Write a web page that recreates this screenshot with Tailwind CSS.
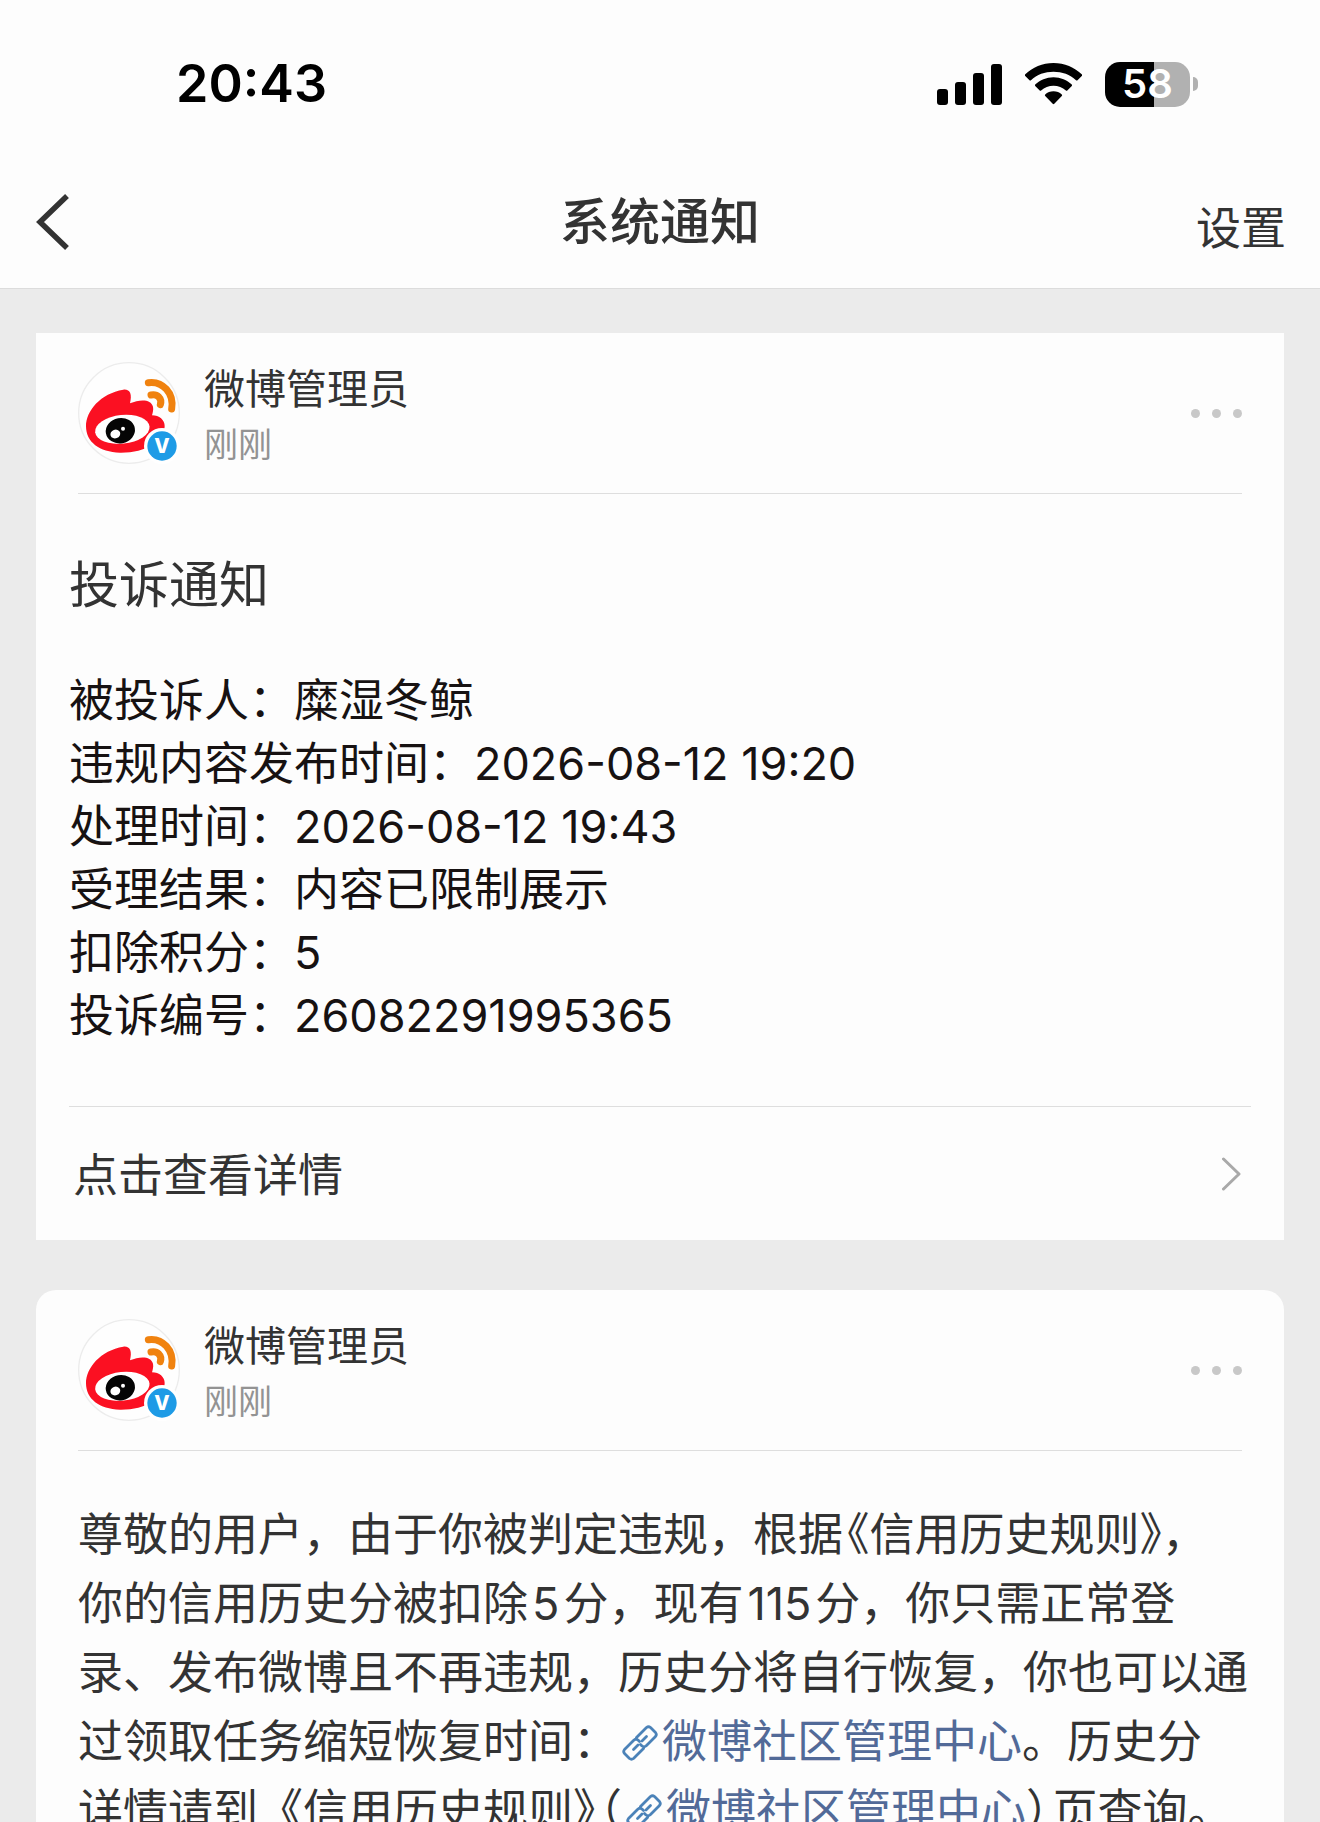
<!DOCTYPE html>
<html lang="zh-CN">
<head>
<meta charset="utf-8">
<meta name="viewport" content="width=device-width, initial-scale=1">
<title>系统通知</title>
<script src="https://cdn.jsdelivr.net/npm/@tailwindcss/browser@4"></script>
</head>
<body class="flex h-screen flex-col overflow-hidden bg-[#ebebeb] font-['Inter','Noto_Sans_CJK_SC',sans-serif] text-[#333]">
<svg class="hidden" aria-hidden="true">
  <symbol id="avatar" viewBox="24 24 306 306">
    <circle cx="177" cy="177" r="151" fill="#fefefe" stroke="#ececec" stroke-width="4"/>
    <path d="M48 217C48 170 92 118 160 107C180 105 187 120 180 148C210 135 243 135 249 158C251 168 248 176 246 184C268 184 284 198 284 216C284 262 226 297 150 296C88 295 48 264 48 217Z" fill="#fb1022"/>
    <ellipse cx="157" cy="226" rx="82" ry="43" transform="rotate(-6 157 226)" fill="#fff"/>
    <ellipse cx="151" cy="230" rx="44" ry="38" transform="rotate(-10 151 230)" fill="#050505"/>
    <ellipse cx="136" cy="240" rx="15" ry="13" transform="rotate(-20 136 240)" fill="#fff"/>
    <circle cx="159" cy="224" r="6" fill="#fff"/>
    <path d="M235 86C278 80 313 118 305 165M243 123C262 119 277 133 271 152" fill="none" stroke="#f0820f" stroke-width="21" stroke-linecap="round"/>
    <circle cx="276" cy="276" r="54" fill="#fff"/>
    <circle cx="276" cy="276" r="44" fill="#1e9be6"/>
    <text x="276" y="298" text-anchor="middle" font-family="Inter, sans-serif" font-size="60" font-weight="800" fill="#fff">V</text>
  </symbol>
  <symbol id="dots" viewBox="0 0 51 9">
    <circle cx="4.5" cy="4.5" r="4.5"/><circle cx="25.5" cy="4.5" r="4.5"/><circle cx="46.5" cy="4.5" r="4.5"/>
  </symbol>
  <symbol id="link" viewBox="0 0 36 36">
    <g fill="none" stroke="#4b82b8" stroke-width="2.8" stroke-linecap="round" stroke-linejoin="round">
      <path d="M14.500 12.500L24.500 2.500Q26.500 .9 28.500 2.500L33.500 7.500Q35.100 9.500 33.500 11.500L24 21Q22 22.500 20 21L18.500 19.500"/>
      <path d="M21.500 23.500L11.500 33.500Q9.500 35.100 7.500 33.500L2.500 28.500Q.9 26.500 2.500 24.500L12 15Q14 13.500 16 15L17.500 16.500"/>
      <path d="M11.500 24.500L16 20M20 16L24.500 11.500"/>
    </g>
  </symbol>
</svg>

<header class="shrink-0 border-b border-[#dcdcdc] bg-[#fdfdfd]">
  <div class="flex h-[168px] items-center justify-between pr-[122px] pl-[176px]">
    <time class="text-[52px] leading-none font-semibold text-black">20:43</time>
    <div class="flex items-center gap-[23px]">
      <svg class="h-[42px] w-[65px]" viewBox="0 0 65 42" aria-label="信号">
        <rect y="26" width="11" height="16" rx="3"/><rect x="18" y="19" width="11" height="23" rx="3"/><rect x="36" y="10" width="11" height="32" rx="3"/><rect x="54" y="1" width="11" height="41" rx="3"/>
      </svg>
      <svg class="h-[42px] w-[57px]" viewBox="0 0 57 42" aria-label="无线网络">
        <path d="M28.500 0C39.500 0 49.500 4.400 57 11.500Q57.500 12.200 57 12.800L52.500 17.200Q51.800 17.800 51 17.200C45 11.600 37.100 8.800 28.500 8.800S12 11.600 6 17.200Q5.200 17.800 4.500 17.200L0 12.800Q-.5 12.200 0 11.500C7.500 4.400 17.500 0 28.500 0Z"/>
        <path d="M28.500 14.200C35.600 14.200 42 17 46.800 21.600Q47.400 22.300 46.800 23L42.300 27.400Q41.600 28 40.900 27.400C37.500 24.500 33.200 22.800 28.500 22.800S19.500 24.500 16.100 27.400Q15.400 28 14.700 27.400L10.200 23Q9.600 22.300 10.200 21.600C15 17 21.400 14.200 28.500 14.200Z"/>
        <path d="M28.500 28.200C31.700 28.200 34.600 29.400 36.800 31.400Q37.500 32.200 36.800 32.900L29.300 40.800Q28.500 41.600 27.700 40.800L20.200 32.900Q19.500 32.200 20.200 31.400C22.400 29.400 25.300 28.200 28.500 28.200Z"/>
      </svg>
      <div class="flex items-center gap-[3px]">
        <div class="flex h-[45px] w-[85px] items-center justify-center rounded-[15px] bg-[linear-gradient(90deg,#000_58%,#b1b1b1_58%)] text-[40px] leading-none font-semibold text-white">58</div>
        <div class="h-[14px] w-[5px] rounded-r-full bg-[#b1b1b1]"></div>
      </div>
    </div>
  </div>
  <div class="grid h-[120px] grid-cols-[1fr_auto_1fr] px-[34px] pb-3">
    <button type="button" aria-label="返回" class="justify-self-start">
      <svg class="h-[56px] w-[38px]" viewBox="0 0 38 56" fill="none" stroke="#333" stroke-width="5.500"><path d="M33 2L6 28L33 54"/></svg>
    </button>
    <h1 class="self-center text-[50px] leading-none font-medium">系统通知</h1>
    <button type="button" class="justify-self-end pt-3 text-[45px] leading-none">设置</button>
  </div>
</header>

<main class="flex flex-col gap-[50px] px-9 pt-[44px]">
  <article class="shrink-0 bg-[#fdfdfd]">
    <div class="mx-[42px] flex h-[161px] items-center border-b border-[#dedede]">
      <svg class="size-[102px]"><use href="#avatar"/></svg>
      <div class="ml-[24px] flex-1 pt-2">
        <h2 class="text-[41px] leading-[56px]">微博管理员</h2>
        <p class="text-[34px] leading-[56px] text-[#939393]">刚刚</p>
      </div>
      <button type="button" aria-label="更多"><svg class="h-[9px] w-[51px] fill-[#c8c8c8]"><use href="#dots"/></svg></button>
    </div>
    <div class="px-[33px] pt-[61px] pb-[59px]">
      <h3 class="text-[50px] leading-[60px]">投诉通知</h3>
      <div class="mt-[54px] text-[45px] leading-[63px] text-[#171212]">
        <p>被投诉人：糜湿冬鲸</p>
        <p>违规内容发布时间：2026-08-12 19:20</p>
        <p>处理时间：2026-08-12 19:43</p>
        <p>受理结果：内容已限制展示</p>
        <p>扣除积分：5</p>
        <p>投诉编号：26082291995365</p>
      </div>
    </div>
    <a href="#detail" class="mx-[33px] flex h-[134px] items-center justify-between border-t border-[#dedede] pr-[10px] pl-1 text-[45px]">
      <span class="pt-1">点击查看详情</span>
      <svg class="h-[34px] w-[19px]" viewBox="0 0 19 34" fill="none" stroke="#a9a9a9" stroke-width="3" stroke-linecap="round" stroke-linejoin="round"><path d="M1.500 2L17 17L1.500 32"/></svg>
    </a>
  </article>

  <article class="shrink-0 rounded-[20px] bg-[#fdfdfd] pb-[60px]">
    <div class="mx-[42px] flex h-[161px] items-center border-b border-[#dedede]">
      <svg class="size-[102px]"><use href="#avatar"/></svg>
      <div class="ml-[24px] flex-1 pt-2">
        <h2 class="text-[41px] leading-[56px]">微博管理员</h2>
        <p class="text-[34px] leading-[56px] text-[#939393]">刚刚</p>
      </div>
      <button type="button" aria-label="更多"><svg class="h-[9px] w-[51px] fill-[#c8c8c8]"><use href="#dots"/></svg></button>
    </div>
    <p class="pt-[49px] pr-[28px] pl-[42px] text-[45px] leading-[69px]">尊敬的用户，由于你被判定违规，根据<span class="ml-1 [font-feature-settings:'halt']">《</span>信用历史规则<span class="[font-feature-settings:'halt']">》</span>，<br>你的信用历史分被扣除<span class="mx-1">5</span>分，现有<span class="mx-1">115</span>分，你只需正常登<br>录、发布微博且不再违规，历史分将自行恢复，你也可以通<br>过领取任务缩短恢复时间：<a href="#center" class="text-[#526a98]"><svg class="mx-1 inline size-[36px] align-[-3px]"><use href="#link"/></svg>微博社区管理中心</a>。历史分<br>详情请到《信用历史规则<span class="mr-1 [font-feature-settings:'halt']">》</span>（<a href="#center" class="text-[#526a98]"><svg class="mx-1 inline size-[36px] align-[-3px]"><use href="#link"/></svg>微博社区管理中心</a><span class="mr-1 [font-feature-settings:'halt']">）</span>页查询。</p>
  </article>
</main>
</body>
</html>
